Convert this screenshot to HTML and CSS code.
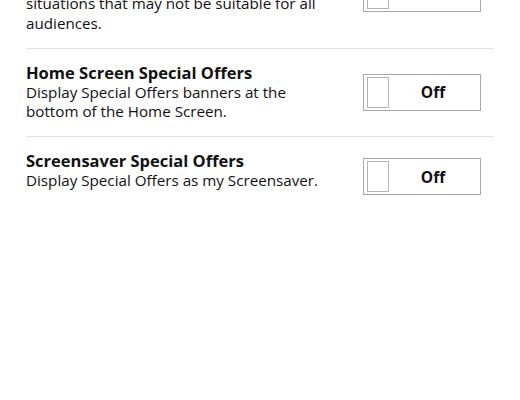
FILE: index.html
```html
<!DOCTYPE html>
<html>
<head>
<meta charset="utf-8">
<link rel="stylesheet" href="styles.css">
</head>
<body>
<div class="list">
  <div class="row first">
    <div class="text">
      <div class="title">Sensitive Content</div>
      <div class="desc">Show a warning for books with mature situations that may not be suitable for all audiences.</div>
    </div>
    <div class="toggle"><span class="knob"></span><span class="label">Off</span></div>
  </div>
  <div class="row">
    <div class="text">
      <div class="title">Home Screen Special Offers</div>
      <div class="desc">Display Special Offers banners at the bottom of the Home Screen.</div>
    </div>
    <div class="toggle"><span class="knob"></span><span class="label">Off</span></div>
  </div>
  <div class="row last">
    <div class="text">
      <div class="title">Screensaver Special Offers</div>
      <div class="desc">Display Special Offers as my Screensaver.</div>
    </div>
    <div class="toggle"><span class="knob"></span><span class="label">Off</span></div>
  </div>
</div>
</body>
</html>
```
FILE: styles.css
```css
html, body {
  margin: 0;
  padding: 0;
  background: #ffffff;
}
body {
  width: 520px;
  height: 400px;
  overflow: hidden;
  font-family: "Open Sans", "Noto Sans", sans-serif;
  color: #111111;
}
.list {
  margin: -59px 26px 0 26px;
}
.row {
  display: flex;
  align-items: flex-start;
  padding: 14px 0 15px 0;
  border-bottom: 1px solid #e2e2e2;
}
.row.last {
  border-bottom: none;
}
.text {
  flex: 1;
  max-width: 302px;
}
.title {
  font-size: 16.5px;
  font-weight: 700;
  line-height: 20px;
}
.desc {
  font-size: 15.2px;
  line-height: 19.3px;
}
.toggle {
  align-self: center;
  margin: 7px 13px 7px auto;
  width: 118px;
  height: 37px;
  box-sizing: border-box;
  border: 1px solid #a8a8a8;
  display: flex;
  align-items: center;
  padding: 2px 3px;
}
.knob {
  width: 22px;
  height: 31px;
  box-sizing: border-box;
  border: 1px solid #b4b4b4;
}
.label {
  flex: 1;
  text-align: center;
  font-size: 15.5px;
  font-weight: 700;
}
```
